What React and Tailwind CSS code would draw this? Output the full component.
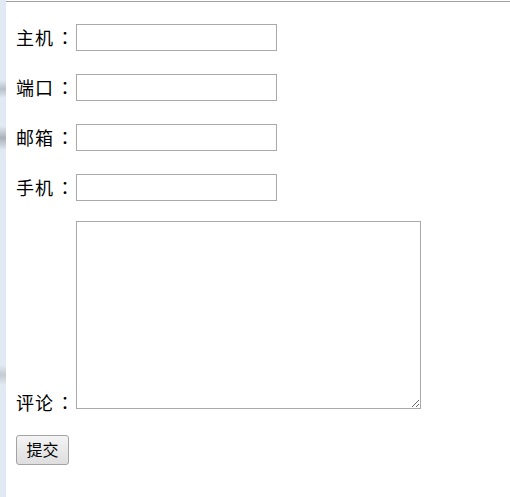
import React from "react";

const fields = ["主机", "端口", "邮箱", "手机"];

const cjk = { fontFamily: '"Noto Sans CJK SC", "Liberation Sans", sans-serif' };
// centred full-width colon, like the reference
const colon = { fontFamily: '"Noto Sans CJK TC", sans-serif' };

export default function App() {
  return (
    <div className="flex w-[510px] h-[497px] bg-white" style={cjk}>
      {/* blurred window edge on the left */}
      <div className="w-[6px] h-full flex flex-col bg-[#e1e9f3]">
        <div className="h-[80px]" />
        <div className="h-[18px] bg-gradient-to-b from-[#e1e9f3] via-[#b9c0c8] to-[#e1e9f3]" />
        <div className="h-[28px]" />
        <div className="h-[24px] bg-gradient-to-b from-[#e1e9f3] via-[#a9b0b8] to-[#e1e9f3]" />
        <div className="h-[215px]" />
        <div className="h-[20px] bg-gradient-to-b from-[#e1e9f3] via-[#c3cad2] to-[#e1e9f3]" />
      </div>

      <div className="flex-1 pt-px">
        <div className="border-t border-[#a0a0a0] pl-[10px] pt-[22px] text-[18px] text-black">
          <div className="flex flex-col gap-[23px]">
            {fields.map((f) => (
              <div key={f} className="flex items-center h-[27px]">
                <span className="w-[60px] leading-[18px] -mt-[2px] tracking-[1px]">
                  {f}
                  <span style={colon} className="ml-[2px]">：</span>
                </span>
                <input
                  type="text"
                  className="w-[201px] h-[27px] border border-[#a9a9a9] bg-white outline-none"
                />
              </div>
            ))}
          </div>

          <div className="flex items-end mt-[20px]">
            <span className="w-[60px] leading-[18px] -mb-[2px] tracking-[1px]">
              评论<span style={colon} className="ml-[2px]">：</span>
            </span>
            <textarea className="w-[345px] h-[188px] border border-[#a9a9a9] bg-white outline-none" />
          </div>

          <button className="mt-[26px] w-[53px] h-[30px] pb-[2px] border border-[#a3a3a3] rounded-[3px] bg-gradient-to-b from-[#f4f4f4] to-[#dedede] text-[16px] leading-none text-black">
            提交
          </button>
        </div>
      </div>
    </div>
  );
}
